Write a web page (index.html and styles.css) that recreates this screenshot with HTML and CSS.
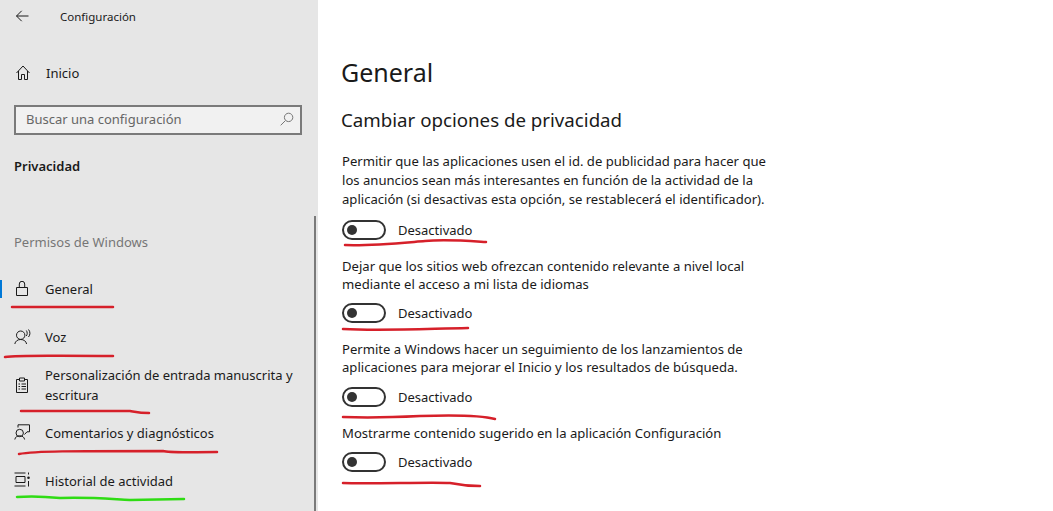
FILE: index.html
```html
<!DOCTYPE html>
<html lang="es">
<head>
  <meta charset="UTF-8">
  <meta name="viewport" content="width=device-width, initial-scale=1.0">
  <title>Configuración</title>
  <link rel="stylesheet" href="styles.css">
</head>
<body>

  <aside class="sidebar">
    <div class="titlebar">
      <svg width="16" height="16" viewBox="0 0 16 16"><path d="M13.5 7H1.5M6.7 1.8L1.5 7l5.200 5.200"/></svg>
      <span>Configuración</span>
    </div>

    <div class="home">
      <svg width="16" height="16" viewBox="0 0 16 16"><path d="M.5 8L7 1l6.500 7M2.500 6V14.500H5.500V9.500H8.500V14.500H11.500V6"/></svg>
      <span>Inicio</span>
    </div>

    <div class="search">
      <span>Buscar una configuración</span>
      <svg class="search-icon" width="14" height="14" viewBox="0 0 14 14"><circle cx="8.6" cy="5.4" r="4.2"/><path d="M5.500 8.500L.7 13.300"/></svg>
    </div>

    <h2 class="section">Privacidad</h2>
    <div class="group">Permisos de Windows</div>

    <nav class="nav">
      <a class="nav-item current">
        <svg width="16" height="16" viewBox="0 0 16 16"><path d="M1.500 6.500h11v8h-11zM4.300 6.500V3a2.700 2.700 0 0 1 5.400 0v3.500"/></svg>
        <span>General</span>
      </a>
      <a class="nav-item">
        <svg class="wide" width="18" height="16" viewBox="0 0 18 16"><circle cx="6.700" cy="6.200" r="4.200"/><path d="M.8 15c.5-2.800 2.800-4.500 5.900-4.500s5.400 1.700 5.900 4.500M12.300 1.500c1.200 1.500 1.200 4 0 5.500M14.500.5c1.900 2.200 1.900 5.300 0 7.500"/></svg>
        <span>Voz</span>
      </a>
      <a class="nav-item tall">
        <svg width="16" height="16" viewBox="0 0 16 16"><path d="M4.500 2.500H1.500v13h11v-13H9.500M4.500 1h5v3h-5zM3.500 7h1.500M6.500 7h4.500M3.500 9.500h1.500M6.500 9.500h4.500M3.500 12h1.500M6.500 12h4.500"/></svg>
        <span>Personalización de entrada manuscrita y escritura</span>
      </a>
      <a class="nav-item">
        <svg class="wide" width="18" height="18" viewBox="0 0 18 18"><circle cx="5.700" cy="9" r="3.700"/><path d="M.8 15.500c.4-2.500 2.400-3.700 4.900-3.700s4.500 1.200 4.900 3.700M4 3.500V.8H15.500V7.800H13L10.500 10.500"/></svg>
        <span>Comentarios y diagnósticos</span>
      </a>
      <a class="nav-item">
        <svg class="wide" width="18" height="18" viewBox="0 0 18 18"><path d="M.5 1h11M.5 14h11M2 4.500h9v6H2zM14.500 .5v2M14.500 9v5.500"/><circle class="dot" cx="14.500" cy="5.800" r="1.300"/></svg>
        <span>Historial de actividad</span>
      </a>
    </nav>

    <div class="scrollbar"></div>
  </aside>

  <main class="content">
    <h1>General</h1>
    <h2>Cambiar opciones de privacidad</h2>

    <section class="option">
      <p>Permitir que las aplicaciones usen el id. de publicidad para hacer que los anuncios sean más interesantes en función de la actividad de la aplicación (si desactivas esta opción, se restablecerá el identificador).</p>
      <div class="toggle-row"><span class="toggle"></span><span>Desactivado</span></div>
    </section>

    <section class="option">
      <p>Dejar que los sitios web ofrezcan contenido relevante a nivel local mediante el acceso a mi lista de idiomas</p>
      <div class="toggle-row"><span class="toggle"></span><span>Desactivado</span></div>
    </section>

    <section class="option">
      <p>Permite a Windows hacer un seguimiento de los lanzamientos de aplicaciones para mejorar el Inicio y los resultados de búsqueda.</p>
      <div class="toggle-row"><span class="toggle"></span><span>Desactivado</span></div>
    </section>

    <section class="option">
      <p>Mostrarme contenido sugerido en la aplicación Configuración</p>
      <div class="toggle-row"><span class="toggle"></span><span>Desactivado</span></div>
    </section>
  </main>

  <!-- hand drawn marks on top of the screenshot -->
  <svg class="marks" width="1053" height="511" viewBox="0 0 1053 511">
    <path class="red" d="M12 307L113 307"/>
    <path class="red" d="M5 357C20 355 40 356 113 356"/>
    <path class="red" d="M21 411L130 411C136 412 140 413 149 413"/>
    <path class="red" d="M19 454C35 451 70 451 163 451C170 453 190 452 217 452"/>
    <path class="green" d="M17 497C30 496 50 497 60 498C90 497 110 499 130 500L184 499"/>
    <path class="red" d="M345 245C370 246 400 243 425 241C445 239 470 241 486 242"/>
    <path class="red" d="M343 329C380 331 420 329 468 328"/>
    <path class="red" d="M343 417C370 418 400 417 420 416C450 415 480 415 495 419"/>
    <path class="red" d="M343 483C370 484 430 482 450 483C460 485 470 486 480 486"/>
  </svg>

</body>
</html>
```

FILE: styles.css
```css
* {
  box-sizing: border-box;
}

body {
  margin: 0;
  width: 1053px;
  height: 511px;
  overflow: hidden;
  display: flex;
  position: relative;
  background: #fff;
  color: #1a1a1a;
  font-family: 'Noto Sans', 'Open Sans', sans-serif;
  font-size: 13px;
}

svg {
  flex: none;
}

svg path,
svg circle {
  fill: none;
  stroke: #1a1a1a;
  stroke-width: 1;
}

.sidebar {
  width: 318px;
  height: 511px;
  flex: none;
  position: relative;
  background: #e6e6e6;
  overflow: hidden;
}

.titlebar {
  height: 33px;
  display: flex;
  align-items: center;
  padding-left: 15px;
  font-size: 11.5px;
}

.titlebar span {
  margin-left: 29px;
}

.home {
  display: flex;
  align-items: center;
  height: 20px;
  margin-top: 30px;
  padding-left: 16px;
}

.home span {
  margin-left: 14px;
}

.search {
  width: 288px;
  height: 30px;
  margin: 22px 0 0 14px;
  padding: 0 6px 2px 10px;
  display: flex;
  align-items: center;
  justify-content: space-between;
  background: #f1f1f1;
  border: 2px solid #7a7a7a;
  color: #666;
}

.search-icon path,
.search-icon circle {
  stroke: #777;
}

.section {
  margin: 22px 0 0 14px;
  font-size: 13px;
  font-weight: 600;
  line-height: 18px;
}

.group {
  margin: 58px 0 0 14px;
  color: #767676;
  line-height: 18px;
}

.nav {
  margin-top: 14px;
  display: flex;
  flex-direction: column;
}

.nav-item {
  height: 48px;
  display: flex;
  align-items: center;
  position: relative;
  padding-left: 15px;
  gap: 14px;
}

.nav-item.tall {
  line-height: 20px;
}

.nav-item.tall span {
  width: 262px;
}

.wide {
  margin: 0 -1px;
}

.current::before {
  content: "";
  position: absolute;
  left: 0;
  top: 15px;
  width: 2px;
  height: 18px;
  background: #0078d7;
}

svg .dot {
  fill: #1a1a1a;
  stroke: none;
}

.scrollbar {
  position: absolute;
  right: 2px;
  top: 216px;
  bottom: 0;
  width: 2px;
  background: #7a7a7a;
}

.content {
  padding: 54px 0 0 24px;
  flex: 1;
}

.content h1 {
  margin: 0 0 0 -1px;
  font-size: 25px;
  font-weight: 400;
  line-height: 36px;
}

.content h2 {
  margin: 16px 0 0 -1px;
  font-size: 18.7px;
  font-weight: 400;
  line-height: 28px;
}

.option p {
  width: 432px;
  margin: 0;
  font-size: 13.1px;
  line-height: 18px;
}

.option:first-of-type {
  margin-top: 18px;
}

.option:first-of-type p {
  line-height: 19px;
}

.toggle-row {
  display: flex;
  align-items: center;
  gap: 12px;
  height: 20px;
  margin-top: 10.5px;
  margin-bottom: 17px;
}

.toggle {
  width: 44px;
  height: 20px;
  position: relative;
  border: 2px solid #333;
  border-radius: 10px;
}

.toggle::after {
  content: "";
  position: absolute;
  left: 3px;
  top: 3px;
  width: 10px;
  height: 10px;
  border-radius: 50%;
  background: #333;
}

.marks {
  position: absolute;
  left: 0;
  top: 0;
  pointer-events: none;
}

.marks .red {
  stroke: #d6202a;
  stroke-width: 2.5;
  stroke-linecap: round;
}

.marks .green {
  stroke: #2fdc14;
  stroke-width: 2.5;
  stroke-linecap: round;
}
```
